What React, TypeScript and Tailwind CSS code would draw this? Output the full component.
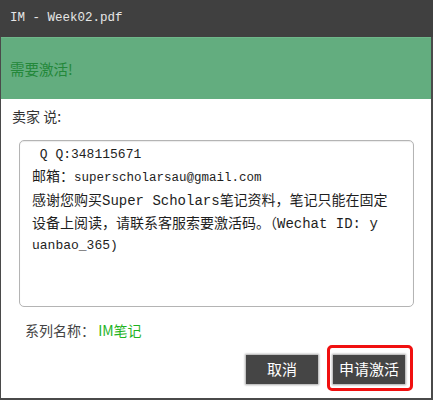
const mono = "font-['Liberation_Mono','Noto_Sans_CJK_SC',monospace]";
const sans = "font-['Noto_Sans_CJK_SC','Liberation_Sans',sans-serif]";

export default function App() {
  return (
    <div className={`w-[433px] h-[400px] flex flex-col bg-white ${sans}`}>
      {/* Title bar */}
      <div className="h-[37px] bg-[#404040] flex items-center px-[10px]">
        <span className={`${mono} text-[12.5px] text-[#e6e6e6]`}>IM - Week02.pdf</span>
      </div>

      <div className="flex-1 flex flex-col border-l border-r-2 border-b-2 border-[#4a4a4a]">
        {/* Green banner */}
        <div className="h-[62px] bg-[#63ad7f] border-t border-[#6fb68a] flex items-center px-[9px]">
          <span className="text-[14.5px] text-[#23883a]">需要激活!</span>
        </div>

        <div className="flex-1 flex flex-col relative">
          <div className="pl-[11px] pt-[7px] h-[41px] text-[14px] text-[#333] leading-[21px]">卖家 说:</div>

          {/* Message box */}
          <div className="ml-[18px] w-[395px] h-[167px] border border-[#b4b4b4] rounded-[5px] pl-[12px] pt-[3px] shadow-[inset_0_1px_1px_rgba(0,0,0,0.08)]">
            <div className="text-[14px] leading-[21px] text-[#1e1e1e] whitespace-pre">
              <div className={`${mono} text-[13px]`}>{" "}Q Q:348115671</div>
              <div>
                邮箱：<span className={`${mono} text-[12.5px]`}>superscholarsau@gmail.com</span>
              </div>
              <div>
                感谢您购买<span className={mono}>Super Scholars</span>笔记资料，笔记只能在固定
              </div>
              <div>
                设备上阅读，请联系客服索要激活码。（<span className={mono}>Wechat ID: y</span>
              </div>
              <div className={`${mono} text-[13px]`}>uanbao_365)</div>
            </div>
          </div>

          <div className="pl-[24px] pt-[13px] text-[14px] leading-[21px] text-[#444] whitespace-pre">
            系列名称： <span className="text-[#1fb41f]">IM笔记</span>
          </div>

          {/* Buttons */}
          <div className="flex justify-end gap-[15px] pr-[26px] mt-[14px]">
            <button className="w-[72px] h-[29px] bg-[#454545] text-white text-[15px] shadow-[0_0_2px_1px_rgba(0,0,0,0.35)]">
              取消
            </button>
            <button className="w-[72px] h-[29px] bg-[#454545] text-white text-[15px] shadow-[0_0_2px_1px_rgba(0,0,0,0.35)]">
              申请激活
            </button>
          </div>

          {/* Highlight */}
          <div className="absolute left-[326px] top-[246px] w-[86px] h-[46px] border-[3px] border-[#f01010] rounded-[5px]" />
        </div>
      </div>
    </div>
  );
}
